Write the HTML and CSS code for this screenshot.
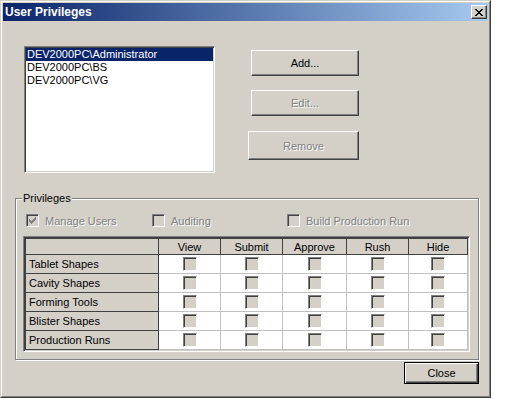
FILE: index.html
```html
<!DOCTYPE html>
<html>
<head>
	<title>User Privileges</title>
	<link rel="stylesheet" href="styles.css">
</head>
<body>
	<div class="window">
		<div class="frame">
			<div class="titlebar">
				<span class="title">User Privileges</span>
				<button class="title-close">
					<svg width="8" height="7" viewBox="0 0 8 7" shape-rendering="crispEdges">
						<path d="M0 0h2v1h-2z M6 0h2v1h-2z M1 1h2v1h-2z M5 1h2v1h-2z M2 2h4v1h-4z M3 3h2v1h-2z M2 4h4v1h-4z M1 5h2v1h-2z M5 5h2v1h-2z M0 6h2v1h-2z M6 6h2v1h-2z" fill="#000"/>
					</svg>
				</button>
			</div>

			<div class="content">
				<div class="top">
					<div class="listbox">
						<div class="item selected">DEV2000PC\Administrator</div>
						<div class="item">DEV2000PC\BS</div>
						<div class="item">DEV2000PC\VG</div>
					</div>
					<div class="actions">
						<button class="btn add">Add...</button>
						<button class="btn edit" disabled>Edit...</button>
						<button class="btn remove" disabled>Remove</button>
					</div>
				</div>

				<fieldset class="group">
					<legend>Privileges</legend>
					<div class="options">
						<div class="opt manage">
							<span class="box">
								<svg width="7" height="7" viewBox="0 0 7 7" shape-rendering="crispEdges">
									<path d="M6 0h1v1h-1z M5 1h2v1h-2z M0 2h1v1h-1z M4 2h3v1h-3z M0 3h2v1h-2z M3 3h3v1h-3z M0 4h5v1h-5z M1 5h3v1h-3z M2 6h1v1h-1z" fill="#808080"/>
								</svg>
							</span>
							<span class="label">Manage Users</span>
						</div>
						<div class="opt auditing">
							<span class="box"></span>
							<span class="label">Auditing</span>
						</div>
						<div class="opt">
							<span class="box"></span>
							<span class="label">Build Production Run</span>
						</div>
					</div>

					<div class="grid-wrap">
						<table class="grid">
							<colgroup>
								<col class="c-name">
								<col class="c-perm">
								<col class="c-perm">
								<col class="c-wide">
								<col class="c-perm">
								<col>
							</colgroup>
							<tr class="head">
								<th></th>
								<th>View</th>
								<th>Submit</th>
								<th>Approve</th>
								<th>Rush</th>
								<th>Hide</th>
							</tr>
							<tr>
								<th class="row-name">Tablet Shapes</th>
								<td><span class="box"></span></td>
								<td><span class="box"></span></td>
								<td><span class="box"></span></td>
								<td><span class="box"></span></td>
								<td><span class="box"></span></td>
							</tr>
							<tr>
								<th class="row-name">Cavity Shapes</th>
								<td><span class="box"></span></td>
								<td><span class="box"></span></td>
								<td><span class="box"></span></td>
								<td><span class="box"></span></td>
								<td><span class="box"></span></td>
							</tr>
							<tr>
								<th class="row-name">Forming Tools</th>
								<td><span class="box"></span></td>
								<td><span class="box"></span></td>
								<td><span class="box"></span></td>
								<td><span class="box"></span></td>
								<td><span class="box"></span></td>
							</tr>
							<tr>
								<th class="row-name">Blister Shapes</th>
								<td><span class="box"></span></td>
								<td><span class="box"></span></td>
								<td><span class="box"></span></td>
								<td><span class="box"></span></td>
								<td><span class="box"></span></td>
							</tr>
							<tr>
								<th class="row-name">Production Runs</th>
								<td><span class="box"></span></td>
								<td><span class="box"></span></td>
								<td><span class="box"></span></td>
								<td><span class="box"></span></td>
								<td><span class="box"></span></td>
							</tr>
						</table>
					</div>
				</fieldset>

				<div class="footer">
					<button class="btn close">Close</button>
				</div>
			</div>
		</div>
	</div>
</body>
</html>
```

FILE: styles.css
```css
*{
	box-sizing: border-box;
}

body{
	margin: 0;
	background-color: #fff;
	font: normal 11px "Liberation Sans", Arial, sans-serif;
	color: #000;
}

/* window frame */
.window{
	width: 491px;
	height: 398px;
	border: 1px solid;
	border-color: #d4d0c8 #404040 #404040 #d4d0c8;
	background-color: #d4d0c8;
}

.frame{
	height: 100%;
	padding: 1px;
	border: 1px solid;
	border-color: #fff #808080 #808080 #fff;
}

.titlebar{
	display: flex;
	align-items: center;
	justify-content: space-between;
	height: 18px;
	padding: 0 1px 0 2px;
	background: linear-gradient(to right, #0a246a, #a6caf0);
}

.title{
	font-weight: bold;
	font-size: 12px;
	color: #fff;
}

.title-close{
	display: flex;
	align-items: center;
	justify-content: center;
	width: 16px;
	height: 14px;
	padding: 0;
	border: 1px solid;
	border-color: #fff #404040 #404040 #fff;
	background-color: #d4d0c8;
	box-shadow: inset -1px -1px #808080;
}

/* top part: list and buttons */
.top{
	display: flex;
	padding: 25px 0 0 21px;
}

.listbox{
	width: 191px;
	height: 127px;
	padding: 1px;
	border: 1px solid;
	border-color: #808080 #fff #fff #808080;
	box-shadow: inset 1px 1px #404040, inset -1px -1px #d4d0c8;
	background-color: #fff;
}

.item{
	height: 13px;
	padding-left: 1px;
	line-height: 13px;
	white-space: nowrap;
}

.item.selected{
	background-color: #0a246a;
	color: #fff;
}

.actions{
	display: flex;
	flex-direction: column;
	align-items: flex-end;
	width: 111px;
	margin-left: 33px;
}

.btn{
	padding: 0;
	border: 1px solid;
	border-color: #fff #404040 #404040 #fff;
	background-color: #d4d0c8;
	box-shadow: inset -1px -1px #808080;
	font: inherit;
	color: #000;
}

.btn:disabled{
	color: #808080;
	text-shadow: 1px 1px 0 #fff;
}

.add{
	width: 108px;
	height: 26px;
	margin-top: 4px;
}

.edit{
	width: 108px;
	height: 26px;
	margin-top: 14px;
}

.remove{
	width: 111px;
	height: 29px;
	margin-top: 15px;
}

/* privileges group */
.group{
	width: 464px;
	min-width: 0;
	margin: 19px 0 0 12px;
	padding: 0 0 7px 0;
	border: 1px solid #808080;
	box-shadow: inset 1px 1px #fff, 1px 1px #fff;
}

.group legend{
	margin-left: 6px;
	padding: 0 1px;
	line-height: 13px;
	background-color: #d4d0c8;
}

.options{
	display: flex;
	height: 13px;
	margin-top: 9px;
	padding-left: 10px;
}

.opt{
	display: flex;
	align-items: center;
	gap: 6px;
}

.opt.manage{
	width: 126px;
}

.opt.auditing{
	width: 135px;
}

.opt .label{
	color: #808080;
	text-shadow: 1px 1px 0 #fff;
}

.box{
	display: flex;
	align-items: center;
	justify-content: center;
	width: 13px;
	height: 13px;
	border: 1px solid;
	border-color: #808080 #fff #fff #808080;
	box-shadow: inset 1px 1px #404040, inset -1px -1px #d4d0c8;
	background-color: #d4d0c8;
}

.grid-wrap{
	width: 447px;
	margin: 9px 0 0 7px;
	padding: 1px;
	border: 1px solid;
	border-color: #808080 #fff #fff #808080;
	box-shadow: inset 1px 1px #404040, inset -1px -1px #d4d0c8;
	background-color: #fff;
}

.grid{
	width: 443px;
	border-collapse: collapse;
	table-layout: fixed;
}

.c-name{
	width: 133px;
}

.c-perm{
	width: 62px;
}

.c-wide{
	width: 64px;
}

.grid th{
	height: 16px;
	padding: 0;
	border: 1px solid #404040;
	background-color: #d4d0c8;
	font-weight: normal;
	white-space: nowrap;
}

.grid .row-name{
	height: 19px;
	padding-left: 3px;
	text-align: left;
}

.grid td{
	padding: 0;
	border: 1px solid #c0c0c0;
	background-color: #fff;
}

.grid td .box{
	width: 14px;
	height: 14px;
	margin: 0 auto;
}

/* bottom */
.footer{
	display: flex;
	justify-content: flex-end;
	padding-right: 9px;
}

.close{
	width: 75px;
	height: 22px;
	margin-top: 2px;
	border-color: #000;
	box-shadow: inset 1px 1px #fff, inset -1px -1px #404040, inset -2px -2px #808080;
}
```
